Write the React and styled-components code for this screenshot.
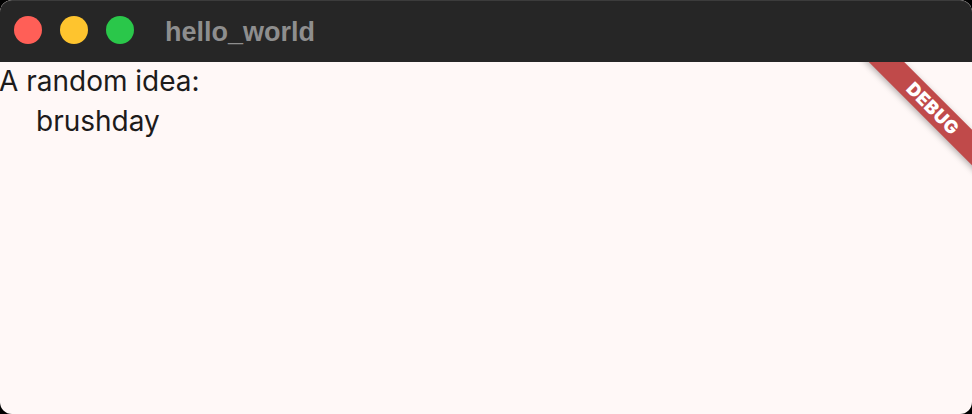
import styled, { createGlobalStyle } from "styled-components";

const GlobalStyle = createGlobalStyle`
  html, body {
    margin: 0;
    padding: 0;
    background: #000;
  }
`;

const Window = styled.div`
  width: 972px;
  height: 414px;
  border-radius: 12px;
  overflow: hidden;
  display: flex;
  flex-direction: column;
  background: #fff8f7;
`;

const TitleBar = styled.div`
  height: 62px;
  flex-shrink: 0;
  display: flex;
  align-items: center;
  padding-left: 14px;
  background: #262626;
  border-top: 1px solid #3c3c3c;
  border-radius: 12px 12px 0 0;
  box-sizing: border-box;
`;

const Lights = styled.div`
  display: flex;
  gap: 18px;
  margin-top: -4px;
`;

const Light = styled.span`
  width: 28px;
  height: 28px;
  border-radius: 50%;
  background: ${(p) => p.color};
`;

const Title = styled.div`
  margin-left: 31px;
  margin-top: 2px;
  font-family: "Liberation Sans", Arial, sans-serif;
  font-weight: 700;
  font-size: 27px;
  color: #8e8e8e;
`;

const Content = styled.div`
  position: relative;
  flex: 1;
  overflow: hidden;
  font-family: Inter, "Noto Sans", sans-serif;
  color: #1d1b1b;
`;

const Heading = styled.div`
  font-size: 28px;
  line-height: 40px;
  margin-top: -1px;
  margin-left: -1px;
`;

const Idea = styled.div`
  font-size: 28px;
  line-height: 40px;
  padding-left: 36px;
`;

const Banner = styled.div`
  position: absolute;
  top: 34px;
  right: -51px;
  width: 180px;
  height: 25px;
  transform: rotate(45deg);
  background: #c04a4a;
  box-shadow: 0 2px 6px rgba(0, 0, 0, 0.3);
  display: flex;
  align-items: center;
  justify-content: center;
  color: #fff;
  font-family: Inter, "Liberation Sans", sans-serif;
  font-weight: 900;
  font-size: 18px;
  letter-spacing: 0.6px;
`;

export default function App() {
  return (
    <>
      <GlobalStyle />
      <Window>
        <TitleBar>
          <Lights>
            <Light color="#ff5f57" />
            <Light color="#fec42e" />
            <Light color="#2ac74a" />
          </Lights>
          <Title>hello_world</Title>
        </TitleBar>
        <Content>
          <Heading>A random idea:</Heading>
          <Idea>brushday</Idea>
          <Banner>DEBUG</Banner>
        </Content>
      </Window>
    </>
  );
}
